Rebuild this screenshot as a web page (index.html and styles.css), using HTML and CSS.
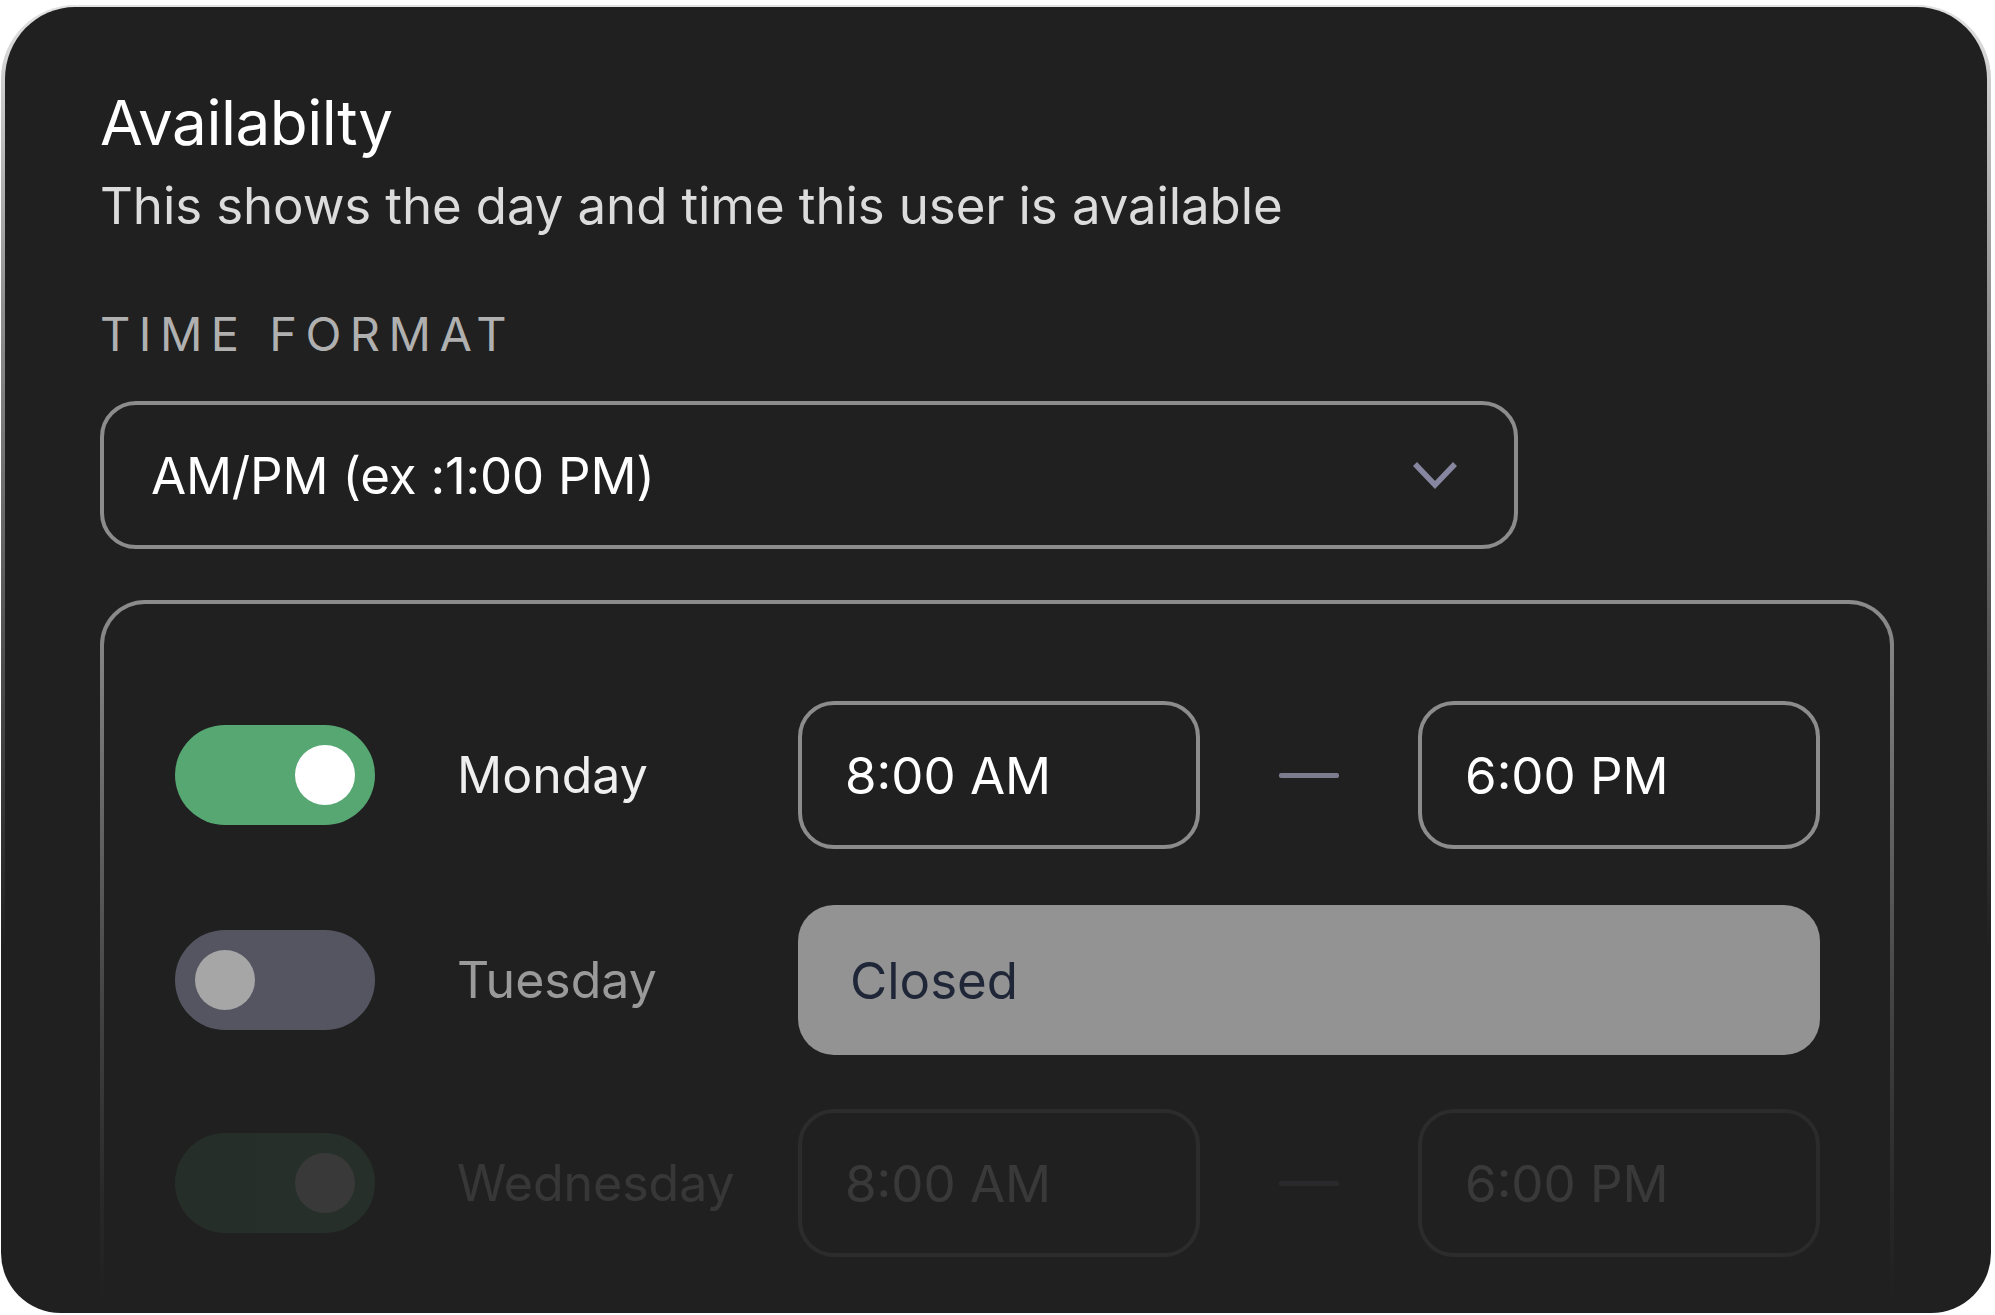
FILE: index.html
```html
<!DOCTYPE html>
<html lang="en">
<head>
<meta charset="utf-8">
<title>Availability</title>
<link rel="stylesheet" href="styles.css">
</head>
<body>
<div class="card">
  <h1 class="title">Availabilty</h1>
  <p class="subtitle">This shows the day and time this user is available</p>
  <div class="label">TIME FORMAT</div>
  <div class="select">
    <span class="select-value">AM/PM (ex :1:00 PM)</span>
    <svg class="chevron" width="46" height="30" viewBox="0 0 46 30" aria-hidden="true">
      <polyline points="3,4 23,25 43,4" fill="none" stroke="#8686a0" stroke-width="5.5" stroke-linejoin="miter"/>
    </svg>
  </div>
  <div class="panel">
    <div class="row">
      <div class="toggle on"><span class="knob"></span></div>
      <div class="day">Monday</div>
      <div class="times">
        <div class="time">8:00 AM</div>
        <span class="dash"></span>
        <div class="time">6:00 PM</div>
      </div>
    </div>
    <div class="row">
      <div class="toggle off"><span class="knob"></span></div>
      <div class="day muted">Tuesday</div>
      <div class="closed">Closed</div>
    </div>
    <div class="row faded">
      <div class="toggle on"><span class="knob"></span></div>
      <div class="day">Wednesday</div>
      <div class="times">
        <div class="time">8:00 AM</div>
        <span class="dash"></span>
        <div class="time">6:00 PM</div>
      </div>
    </div>
  </div>
</div>
</body>
</html>
```

FILE: styles.css
```css
* { box-sizing: border-box; }

body {
  margin: 0;
  background: #ffffff;
  font-family: Inter, "Noto Sans", "Liberation Sans", sans-serif;
}

.card {
  margin: 5px 4px 0 1px;
  width: 1990px;
  height: 1308px;
  border-radius: 74px 74px 60px 60px;
  border: 4px solid transparent;
  border-top-width: 2px;
  background:
    linear-gradient(#202020, #202020) padding-box,
    linear-gradient(180deg, #e2e2e2 0%, #909090 23%, #4a4a4a 52%, #202020 72%) border-box;
  padding: 78px 93px 0 95px;
  overflow: hidden;
}

.title {
  margin: 0;
  font-size: 62px;
  line-height: 76px;
  font-weight: 400;
  letter-spacing: -0.5px;
  color: #ffffff;
}

.subtitle {
  margin: 14px 0 0;
  font-size: 51px;
  line-height: 62px;
  letter-spacing: -0.1px;
  color: #dcdcdc;
}

.label {
  margin-top: 68px;
  font-size: 47px;
  line-height: 57px;
  letter-spacing: 0.18em;
  color: #b0b0b0;
}

.select {
  margin-top: 39px;
  width: 1418px;
  height: 148px;
  border: 4px solid #8c8c8c;
  border-radius: 36px;
  padding: 0 56px 0 47px;
  display: flex;
  align-items: center;
  justify-content: space-between;
}

.select-value {
  font-size: 51px;
  letter-spacing: -0.2px;
  color: #ffffff;
}

.chevron { display: block; }

.panel {
  margin-top: 51px;
  border: 4px solid transparent;
  border-radius: 45px;
  background:
    linear-gradient(#202020, #202020) padding-box,
    linear-gradient(180deg, #8c8c8c 0px, #7a7a7a 100px, #444444 400px, #282828 600px, #202020 700px) border-box;
  padding: 97px 70px 120px 71px;
  display: flex;
  flex-direction: column;
  gap: 56px;
}

.row {
  display: grid;
  grid-template-columns: 200px 259px 1fr;
  column-gap: 82px;
  align-items: center;
  height: 148px;
}

.row.faded { opacity: 0.11; }

.toggle {
  width: 200px;
  height: 100px;
  border-radius: 50px;
  padding: 20px;
  display: flex;
}

.toggle.on { background: #57a773; justify-content: flex-end; }
.toggle.off { background: #555562; justify-content: flex-start; }

.knob {
  width: 60px;
  height: 60px;
  border-radius: 50%;
}

.toggle.on .knob { background: #ffffff; }
.toggle.off .knob { background: #a6a6a6; }

.day {
  font-size: 50px;
  color: #efefef;
  white-space: nowrap;
}

.day.muted { color: #9a9a9a; }

.times {
  display: grid;
  grid-template-columns: 1fr 218px 1fr;
  align-items: center;
  height: 148px;
}

.time {
  height: 148px;
  border: 4px solid #8c8c8c;
  border-radius: 36px;
  padding-left: 43px;
  display: flex;
  align-items: center;
  font-size: 51px;
  color: #ffffff;
}

.dash {
  justify-self: center;
  width: 60px;
  height: 5px;
  border-radius: 2px;
  background: #7c7c8f;
}

.closed {
  height: 150px;
  border-radius: 36px;
  background: #939393;
  padding-left: 52px;
  display: flex;
  align-items: center;
  font-size: 51px;
  color: #1f2637;
}
```
